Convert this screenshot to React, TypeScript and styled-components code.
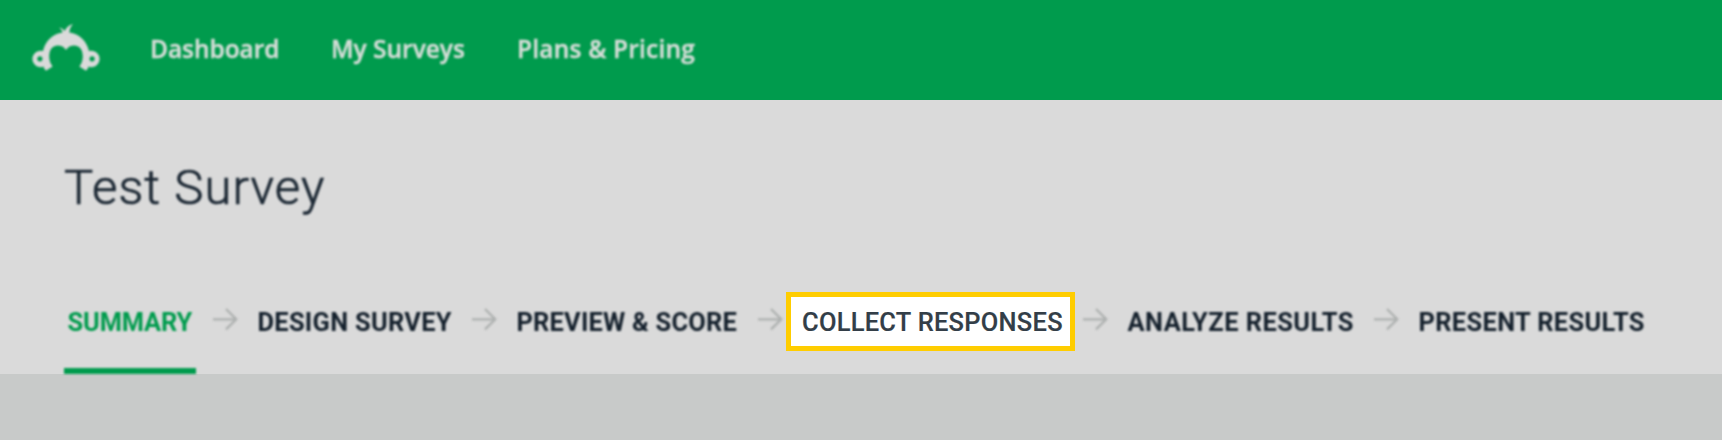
import React from "react";
import styled, { createGlobalStyle } from "styled-components";

const GlobalStyle = createGlobalStyle`
  *, *::before { box-sizing: border-box; }
  html, body { margin: 0; background: #c8cac9; }
`;

const Page = styled.div`
  width: 1722px;
  height: 440px;
  overflow: hidden;
  background: #c8cac9;
`;

const TopBar = styled.header`
  display: flex;
  align-items: center;
  height: 100px;
  padding-left: 32px;
  background: #009b4d;
`;

const Logo = styled.svg`
  display: block;
  width: 68px;
  height: 52px;
  margin: 0 50px 4px 0;
  overflow: visible;
  filter: blur(0.8px);
`;

const Nav = styled.nav`
  display: flex;
  gap: 50px;
  padding-bottom: 2px;
`;

const NavLink = styled.a<{ $width: number; $spacing: number }>`
  width: ${(p) => p.$width}px;
  font: 600 24.5px/34px "Open Sans", sans-serif;
  letter-spacing: ${(p) => p.$spacing}px;
  white-space: nowrap;
  color: #d4ddd7;
  -webkit-text-stroke: 0.5px #d4ddd7;
  filter: blur(0.8px);
`;

const SurveyHeader = styled.section`
  display: flex;
  flex-direction: column;
  justify-content: space-between;
  height: 274px;
  padding: 58px 64px 0;
  background: #dadada;
`;

const Title = styled.h1`
  margin: 0;
  font: 300 49px/60px Roboto, sans-serif;
  letter-spacing: 1.1px;
  white-space: nowrap;
  color: #1c2834;
  -webkit-text-stroke: 0.7px #1c2834;
  filter: blur(0.8px);
`;

const Steps = styled.nav`
  display: flex;
  gap: 17px;
  height: 106px;
`;

const Step = styled.a<{ $width: number; $spacing: number; $active?: boolean }>`
  flex: none;
  width: ${(p) => p.$width}px;
  padding: 35.5px 0 0 3.5px;
  border-bottom: 6px solid ${(p) => (p.$active ? "#009b4d" : "transparent")};
  font: 700 25.4px/36px Roboto, sans-serif;
  letter-spacing: ${(p) => p.$spacing}px;
  white-space: nowrap;
  color: ${(p) => (p.$active ? "#009b4d" : "#14202c")};
  filter: blur(0.8px);
`;

const FocusStep = styled(Step)`
  position: relative;
  z-index: 0;
  padding-left: 3px;
  font-weight: 500;
  color: #333e48;
  -webkit-text-stroke: 0.2px #333e48;
  filter: none;

  &::before {
    content: "";
    position: absolute;
    z-index: -1;
    left: -13px;
    top: 24px;
    width: 289px;
    height: 59px;
    border: 5.5px solid #ffcd00;
    background: #fff;
  }
`;

const Arrow = styled.svg`
  flex: none;
  display: block;
  width: 24px;
  height: 24px;
  margin-top: 39px;
  overflow: visible;
  fill: none;
  stroke: #aeb1b0;
  stroke-width: 2.3;
  filter: blur(0.8px);
`;

type StepItem = { label: string; width: number; spacing: number; kind?: "active" | "focus" };

const steps: StepItem[] = [
  { label: "SUMMARY", width: 132, spacing: -0.12, kind: "active" },
  { label: "DESIGN SURVEY", width: 201, spacing: 0.3 },
  { label: "PREVIEW & SCORE", width: 228, spacing: 0.23 },
  { label: "COLLECT RESPONSES", width: 267, spacing: 0.3, kind: "focus" },
  { label: "ANALYZE RESULTS", width: 233, spacing: 0.47 },
  { label: "PRESENT RESULTS", width: 233, spacing: 0.37 },
];

const links = [
  { label: "Dashboard", width: 131, spacing: -0.05 },
  { label: "My Surveys", width: 136, spacing: 0 },
  { label: "Plans & Pricing", width: 180, spacing: 0.2 },
];

export default function App() {
  return (
    <Page>
      <GlobalStyle />
      <TopBar>
        <Logo viewBox="32 22 68 52" fill="#dadada">
          <path d="M59 27.4Q63 28 64.8 31Q67 25.5 73 24Q69.5 27.8 69.3 32.6C79.5 34 86.5 41 89 51.1A8.2 8.2 0 1 1 88.2 66.5L88.2 68L86 70.8L79.4 66.6Q82.9 62 82.8 56C82.6 49 78.8 45.6 74.3 45.6Q69 45.6 66 50Q63 45.6 57.7 45.6C53.2 45.6 49.4 49 49.2 56Q49.1 62 52.6 66.6L46 70.8L43.8 68L43.8 66.5A8.2 8.2 0 1 1 43 51.1C45.5 41 52.5 34 62.6 32.6Q62 29.5 59 27.4Z" />
          <circle cx="39.9" cy="58.8" r="2.6" fill="#009b4d" />
          <circle cx="92.1" cy="58.8" r="2.6" fill="#009b4d" />
        </Logo>
        <Nav>
          {links.map((l) => (
            <NavLink key={l.label} $width={l.width} $spacing={l.spacing}>
              {l.label}
            </NavLink>
          ))}
        </Nav>
      </TopBar>
      <SurveyHeader>
        <Title>Test Survey</Title>
        <Steps>
          {steps.map((s, i) => {
            const Item = s.kind === "focus" ? FocusStep : Step;
            return (
              <React.Fragment key={s.label}>
                {i > 0 && (
                  <Arrow viewBox="0 0 24 24">
                    <path d="M0 12.3H23M13 2L23.2 12.3L13 22.4" />
                  </Arrow>
                )}
                <Item $width={s.width} $spacing={s.spacing} $active={s.kind === "active"}>
                  {s.label}
                </Item>
              </React.Fragment>
            );
          })}
        </Steps>
      </SurveyHeader>
    </Page>
  );
}
